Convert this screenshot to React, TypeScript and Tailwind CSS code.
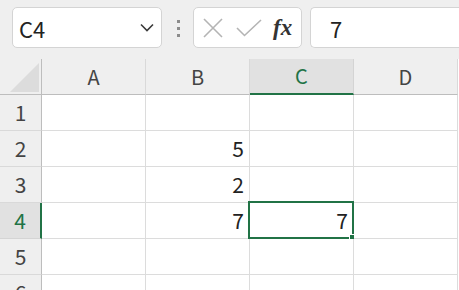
import React from 'react';

const cols = ['A', 'B', 'C', 'D'];
const rows = [1, 2, 3, 4, 5, 6];

const values: Record<string, string> = {
  B2: '5',
  B3: '2',
  B4: '7',
  C4: '7',
};

const font = { fontFamily: '"Noto Sans CJK JP", "Noto Sans", sans-serif' };

function Toolbar() {
  return (
    <div className="flex h-[59px] items-start bg-[#efefef] pt-[7px]">
      {/* name box */}
      <div className="ml-[12px] flex h-[41px] w-[150px] items-center justify-between rounded-[5px] border border-[#d4d4d4] bg-white pl-[6px] pr-[6px]">
        <span className="text-[22px] leading-none text-[#222]">C4</span>
        <svg width="14" height="9" viewBox="0 0 14 9" className="mr-[1px]">
          <path d="M1 1.5 L7 7.5 L13 1.5" fill="none" stroke="#3a3a3a" strokeWidth="1.6" />
        </svg>
      </div>
      {/* grip */}
      <div className="ml-[15px] mt-[13px] flex flex-col gap-[4px]">
        <span className="block h-[3px] w-[3px] bg-[#8c8c8c]" />
        <span className="block h-[3px] w-[3px] bg-[#8c8c8c]" />
        <span className="block h-[3px] w-[3px] bg-[#8c8c8c]" />
      </div>
      {/* formula buttons */}
      <div className="ml-[13px] flex h-[41px] w-[109px] items-center rounded-[5px] border border-[#d4d4d4] bg-white">
        <svg width="20" height="20" viewBox="0 0 20 20" className="ml-[9px]">
          <path d="M1 1 L19 19 M19 1 L1 19" stroke="#b4b4b4" strokeWidth="1.6" />
        </svg>
        <svg width="26" height="18" viewBox="0 0 26 18" className="ml-[13px]">
          <path d="M1 9 L8.5 16.5 L25 1" fill="none" stroke="#b4b4b4" strokeWidth="1.6" />
        </svg>
        <span
          className="ml-[11px] text-[23px] font-bold italic leading-none text-[#333]"
          style={{ fontFamily: '"Liberation Serif", serif' }}
        >
          fx
        </span>
      </div>
      {/* formula input */}
      <div className="ml-[8px] flex h-[41px] flex-1 items-center rounded-l-[5px] border border-r-0 border-[#d4d4d4] bg-white pl-[19px]">
        <span className="text-[22px] leading-none text-[#222]">7</span>
      </div>
    </div>
  );
}

function Grid() {
  return (
    <div className="grid grid-cols-[42px_104px_104px_104px_104px] auto-rows-[36px]">
      {/* header row */}
      <div className="relative border-b border-r border-[#bdbdbd] bg-[#efefef]">
        <svg width="29" height="29" viewBox="0 0 29 29" className="absolute left-[10px] top-[4px]">
          <path d="M29 0 L29 29 L0 29 Z" fill="#dcdcdc" />
        </svg>
      </div>
      {cols.map((c) =>
        c === 'C' ? (
          <div
            key={c}
            className="flex items-center justify-center border-b-[2px] border-r border-b-[#217346] border-r-[#d4d4d4] bg-[#e1e1e1] text-[20px] text-[#217346]"
          >
            {c}
          </div>
        ) : (
          <div
            key={c}
            className="flex items-center justify-center border-b border-r border-b-[#bdbdbd] border-r-[#d9d9d9] bg-[#efefef] text-[20px] text-[#444]"
          >
            {c}
          </div>
        )
      )}
      {rows.map((r) => (
        <React.Fragment key={r}>
          {r === 4 ? (
            <div className="flex items-center justify-center border-b border-r-[2px] border-b-[#d4d4d4] border-r-[#217346] bg-[#e1e1e1] text-[21px] text-[#217346]">
              {r}
            </div>
          ) : (
            <div className="flex items-center justify-center border-b border-r border-b-[#d9d9d9] border-r-[#bdbdbd] bg-[#efefef] text-[21px] text-[#444]">
              {r}
            </div>
          )}
          {cols.map((c) => {
            const key = c + r;
            const selected = key === 'C4';
            return (
              <div
                key={key}
                className="relative flex items-center justify-end border-b border-r border-[#dcdcdc] bg-white pr-[5px] text-[21px] text-[#222]"
              >
                {values[key]}
                {selected && (
                  <>
                    <div className="pointer-events-none absolute -left-[2px] -top-[2px] h-[38px] w-[106px] border-[2px] border-[#217346]" />
                    <div className="absolute -bottom-[3px] -right-[3px] h-[7px] w-[7px] border border-white bg-[#217346]" />
                  </>
                )}
              </div>
            );
          })}
        </React.Fragment>
      ))}
    </div>
  );
}

export default function App() {
  return (
    <div className="h-[290px] w-[459px] overflow-hidden bg-white" style={font}>
      <Toolbar />
      <Grid />
    </div>
  );
}
